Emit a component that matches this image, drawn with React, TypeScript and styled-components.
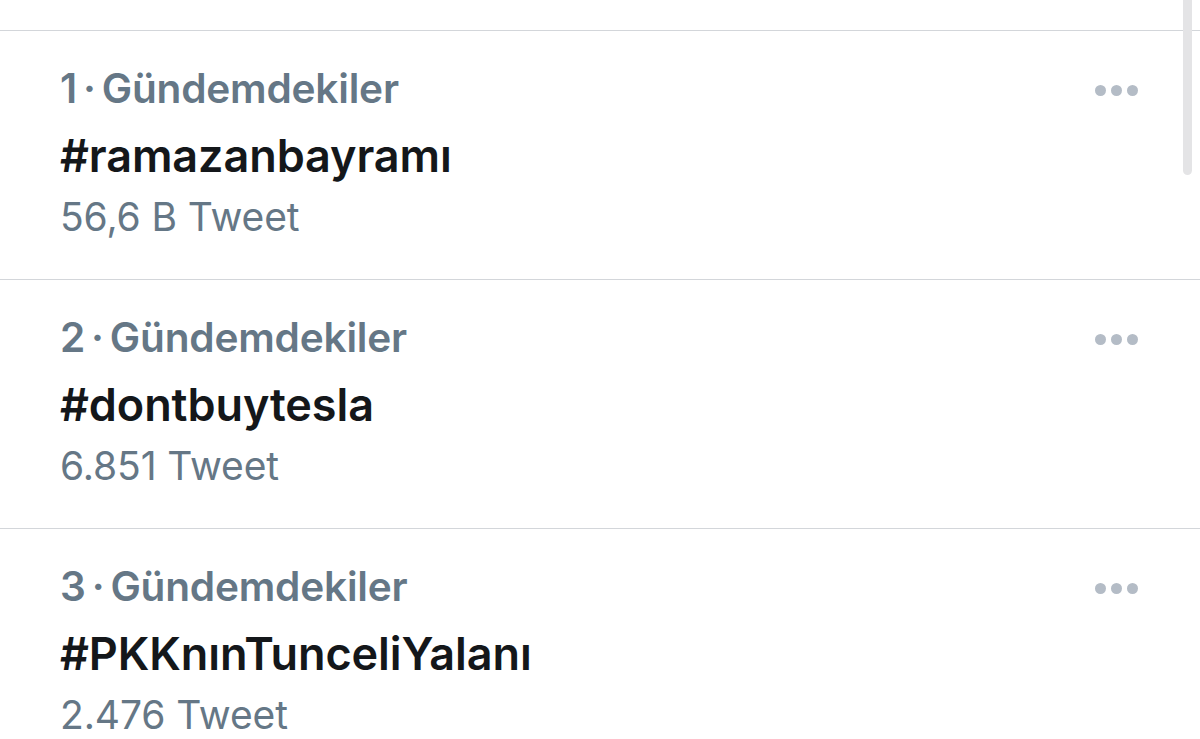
import React from 'react';
import styled, { createGlobalStyle } from 'styled-components';

const GlobalStyle = createGlobalStyle`
  html, body {
    margin: 0;
    padding: 0;
    background: #fff;
    overflow: hidden;
  }
  body {
    font-family: Inter, "Noto Sans", "Liberation Sans", sans-serif;
    -webkit-font-smoothing: antialiased;
  }
`;

interface Trend {
  rank: number;
  tag: string;
  count: string;
}

const trends: Trend[] = [
  { rank: 1, tag: '#ramazanbayramı', count: '56,6 B Tweet' },
  { rank: 2, tag: '#dontbuytesla', count: '6.851 Tweet' },
  { rank: 3, tag: '#PKKnınTunceliYalanı', count: '2.476 Tweet' },
];

const Page = styled.div`
  position: relative;
  width: 1200px;
  height: 739px;
  overflow: hidden;
`;

const TopGap = styled.div`
  height: 30px;
  border-bottom: 1.5px solid #d3d6da;
`;

const Row = styled.div`
  display: flex;
  justify-content: space-between;
  padding: 26px 62px 0 60px;
  height: 249px;
  box-sizing: border-box;
  border-bottom: 1.5px solid #d3d6da;
`;

const Body = styled.div`
  display: flex;
  flex-direction: column;
`;

const Meta = styled.div`
  font-size: 40.6px;
  font-weight: 600;
  line-height: 64px;
  height: 64px;
  white-space: nowrap;
  letter-spacing: -0.2px;
  color: #657786;
`;

const Tag = styled.div`
  font-size: 45px;
  font-weight: 600;
  line-height: 70px;
  height: 64px;
  white-space: nowrap;
  letter-spacing: -0.1px;
  color: #14171a;
`;

const Count = styled.div`
  font-size: 39px;
  font-weight: 400;
  line-height: 64px;
  height: 64px;
  white-space: nowrap;
  letter-spacing: -0.1px;
  color: #657786;
`;

const Sep = styled.span`
  margin: 0 6px;
`;

const More = styled.div`
  display: flex;
  gap: 5px;
  padding-top: 28px;
  height: 11px;
`;

const MoreDot = styled.span`
  width: 11px;
  height: 11px;
  border-radius: 50%;
  background: #b4bcc6;
`;

const Scrollbar = styled.div`
  position: absolute;
  top: -8px;
  right: 8px;
  width: 9px;
  height: 183px;
  border-radius: 5px;
  background: #e4e4e6;
`;

export default function App() {
  return (
    <Page>
      <GlobalStyle />
      <TopGap />
      {trends.map((t) => (
        <Row key={t.rank}>
          <Body>
            <Meta>
              {t.rank}
              <Sep>·</Sep>
              Gündemdekiler
            </Meta>
            <Tag>{t.tag}</Tag>
            <Count>{t.count}</Count>
          </Body>
          <More>
            <MoreDot />
            <MoreDot />
            <MoreDot />
          </More>
        </Row>
      ))}
      <Scrollbar />
    </Page>
  );
}
